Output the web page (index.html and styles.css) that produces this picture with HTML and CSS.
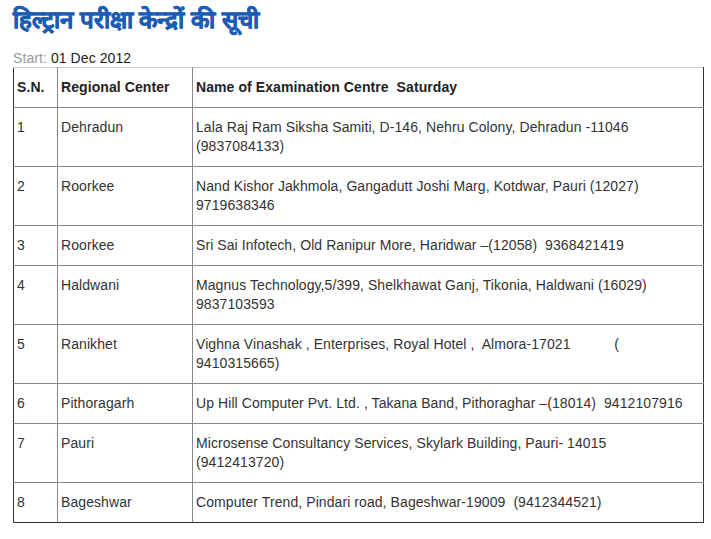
FILE: index.html
```html
<!DOCTYPE html>
<html>
<head>
<meta charset="utf-8">
<link rel="stylesheet" href="styles.css">
</head>
<body>
<div class="page">
  <h1 class="title">हिल्ट्रान परीक्षा केन्द्रों की सूची</h1>
  <div class="start"><span class="label">Start:</span> 01 Dec 2012</div>
  <table class="centres">
    <colgroup>
      <col class="c-sn">
      <col class="c-reg">
      <col class="c-name">
    </colgroup>
    <thead>
      <tr><th>S.N.</th><th>Regional Center</th><th>Name of Examination Centre&nbsp; Saturday</th></tr>
    </thead>
    <tbody>
      <tr><td>1</td><td>Dehradun</td><td>Lala Raj Ram Siksha Samiti, D-146, Nehru Colony, Dehradun -11046 (9837084133)</td></tr>
      <tr><td>2</td><td>Roorkee</td><td>Nand Kishor Jakhmola, Gangadutt Joshi Marg, Kotdwar, Pauri (12027) 9719638346</td></tr>
      <tr><td>3</td><td>Roorkee</td><td>Sri Sai Infotech, Old Ranipur More, Haridwar –(12058)&nbsp; 9368421419</td></tr>
      <tr><td>4</td><td>Haldwani</td><td>Magnus Technology,5/399, Shelkhawat Ganj, Tikonia, Haldwani (16029) 9837103593</td></tr>
      <tr><td>5</td><td>Ranikhet</td><td>Vighna Vinashak , Enterprises, Royal Hotel ,&nbsp; Almora-17021&nbsp;&nbsp;&nbsp;&nbsp;&nbsp;&nbsp;&nbsp;&nbsp;&nbsp;&nbsp; ( 9410315665)</td></tr>
      <tr><td>6</td><td>Pithoragarh</td><td>Up Hill Computer Pvt. Ltd. , Takana Band, Pithoraghar –(18014)&nbsp; 9412107916</td></tr>
      <tr><td>7</td><td>Pauri</td><td>Microsense Consultancy Services, Skylark Building, Pauri- 14015 (9412413720)</td></tr>
      <tr><td>8</td><td>Bageshwar</td><td>Computer Trend, Pindari road, Bageshwar-19009&nbsp; (9412344521)</td></tr>
    </tbody>
  </table>
</div>
</body>
</html>
```
FILE: styles.css
```css
html, body {
  margin: 0;
  padding: 0;
  background: #fff;
}
.page {
  padding: 4px 8px 0 13px;
  font-family: "Liberation Sans", Arial, sans-serif;
  font-size: 14px;
  color: #333;
}
.title {
  margin: 0;
  font-size: 24px;
  line-height: 32px;
  font-weight: bold;
  color: #1b5cb4;
  -webkit-text-stroke: 0.6px #1b5cb4;
}
.start {
  margin-top: 13px;
  line-height: 18px;
  color: #222;
  letter-spacing: 0.08px;
}
.start .label {
  color: #999;
}
.centres {
  width: 690px;
  border-collapse: collapse;
  border-top: 1px solid #ccc;
  border-left: 1px solid #333;
  border-right: 1px solid #333;
  border-bottom: 1px solid #333;
  table-layout: fixed;
  letter-spacing: 0.08px;
}
.c-sn { width: 44px; }
.c-reg { width: 135px; }
.c-name { width: 511px; }
.centres th,
.centres td {
  border: 1px solid #888;
  padding: 10px 4px 10px 3px;
  line-height: 19px;
  text-align: left;
  vertical-align: top;
  color: #333;
}
.centres td:last-child {
  padding-right: 8px;
}
.centres th {
  font-weight: bold;
  color: #222;
}
.centres thead th {
  border-top: 1px solid #ccc;
}
.centres td:first-child,
.centres th:first-child {
  border-left: 1px solid #333;
}
.centres td:last-child,
.centres th:last-child {
  border-right: 1px solid #333;
}
.centres tbody tr:last-child td {
  border-bottom: 1px solid #333;
}
```
